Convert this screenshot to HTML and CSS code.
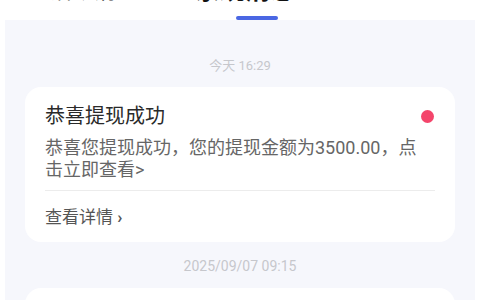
FILE: index.html
```html
<!DOCTYPE html>
<html lang="zh-CN">
<head>
  <meta charset="UTF-8">
  <meta name="viewport" content="width=device-width, initial-scale=1.0">
  <title>消息</title>
  <link rel="stylesheet" href="styles.css">
</head>
<body>

<div class="header">
  <div class="tabs">
    <div class="tab">活动消息</div>
    <div class="tab active">系统消息</div>
  </div>
  <div class="indicator"></div>
</div>

<div class="panel">
  <div class="time first">今天 16:29</div>
  <div class="card">
    <div class="card-head">
      <div class="card-title">恭喜提现成功</div>
      <span class="dot"></span>
    </div>
    <div class="card-text">恭喜您提现成功，您的提现金额为3500.00，点击立即查看&gt;</div>
    <div class="divider"></div>
    <div class="more">查看详情 <span class="chev">›</span></div>
  </div>

  <div class="time">2025/09/07 09:15</div>
  <div class="card">
    <div class="card-head">
      <div class="card-title">恭喜提现成功</div>
    </div>
  </div>
</div>

</body>
</html>
```

FILE: styles.css
```css
body {
  margin: 0;
  padding: 0;
  background-color: #fff;
  font-family: Roboto, "Noto Sans CJK SC", sans-serif;
  height: 300px;
  overflow: hidden;
}

.header {
  position: relative;
  height: 20px;
  overflow: hidden;
}

.tabs {
  display: flex;
  align-items: flex-end;
  margin-top: -24px;
  height: 30px;
  padding-left: 50px;
  gap: 57px;
}

.tab {
  font-size: 22px;
  line-height: 30px;
  color: #333;
}

.tab.active {
  font-size: 25px;
  font-weight: bold;
  color: #111;
}

.indicator {
  position: absolute;
  left: 236px;
  top: 16px;
  width: 42px;
  height: 4px;
  border-radius: 2px;
  background-color: #4a67e3;
}

.panel {
  margin: 0 5px;
  padding: 0 20px;
  background-color: #f6f7fc;
  height: 280px;
  overflow: hidden;
}

.time {
  text-align: center;
  font-size: 14px;
  line-height: 20px;
  color: #c6c7cc;
  margin-top: 14px;
  margin-bottom: 12px;
}

.time.first {
  font-size: 13px;
  padding-top: 36px;
  margin-top: 0;
  margin-bottom: 11px;
}

.card {
  background-color: #fff;
  border-radius: 16px;
  padding: 15px 20px 13px;
}

.card-head {
  display: flex;
  justify-content: space-between;
  align-items: center;
}

.card-title {
  font-size: 20px;
  line-height: 28px;
  color: #2a2a2a;
}

.dot {
  width: 13px;
  height: 13px;
  border-radius: 50%;
  background-color: #f4456b;
  margin-right: 1px;
}

.card-text {
  margin-top: 7px;
  margin-right: 10px;
  font-size: 18px;
  line-height: 22px;
  color: #666;
}

.divider {
  margin-top: 9px;
  height: 1px;
  background-color: #ececec;
}

.more {
  margin-top: 14px;
  font-size: 17px;
  line-height: 24px;
  color: #555;
}

.chev {
  font-weight: bold;
}
```
